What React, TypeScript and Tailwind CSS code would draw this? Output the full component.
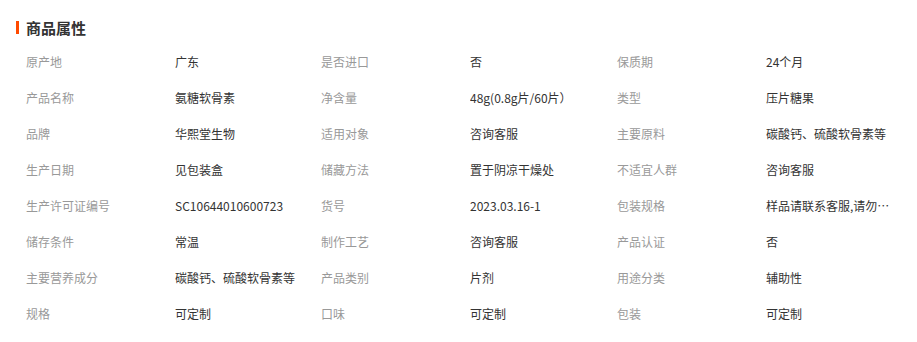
import React from 'react'

const attrs: [string, string][] = [
  ['原产地', '广东'],
  ['是否进口', '否'],
  ['保质期', '24个月'],
  ['产品名称', '氨糖软骨素'],
  ['净含量', '48g(0.8g片/60片）'],
  ['类型', '压片糖果'],
  ['品牌', '华熙堂生物'],
  ['适用对象', '咨询客服'],
  ['主要原料', '碳酸钙、硫酸软骨素等'],
  ['生产日期', '见包装盒'],
  ['储藏方法', '置于阴凉干燥处'],
  ['不适宜人群', '咨询客服'],
  ['生产许可证编号', 'SC10644010600723'],
  ['货号', '2023.03.16-1'],
  ['包装规格', '样品请联系客服,请勿拍下'],
  ['储存条件', '常温'],
  ['制作工艺', '咨询客服'],
  ['产品认证', '否'],
  ['主要营养成分', '碳酸钙、硫酸软骨素等'],
  ['产品类别', '片剂'],
  ['用途分类', '辅助性'],
  ['规格', '可定制'],
  ['口味', '可定制'],
  ['包装', '可定制'],
]

const App = () => {
  return (
    <div className="w-[917px] h-[342px] bg-white font-['Noto_Sans_CJK_SC',sans-serif]">
      {/* title */}
      <div className="flex items-center pt-[17px] pl-4 h-[38px]">
        <span className="w-[3px] h-[13px] bg-[#ff4a00]" />
        <span className="ml-[7px] text-[15px] font-bold text-[#333] leading-5">商品属性</span>
      </div>

      {/* list */}
      <div className="grid grid-cols-[295px_296px_296px] pl-[26px] mt-[6px]">
        {attrs.map(([label, value]) => (
          <div key={label} className="flex items-center h-9 text-xs leading-4">
            <span className="w-[149px] text-[#999] whitespace-nowrap">{label}</span>
            <span className="w-[124px] text-[#333] truncate">{value}</span>
          </div>
        ))}
      </div>
    </div>
  )
}

export default App
